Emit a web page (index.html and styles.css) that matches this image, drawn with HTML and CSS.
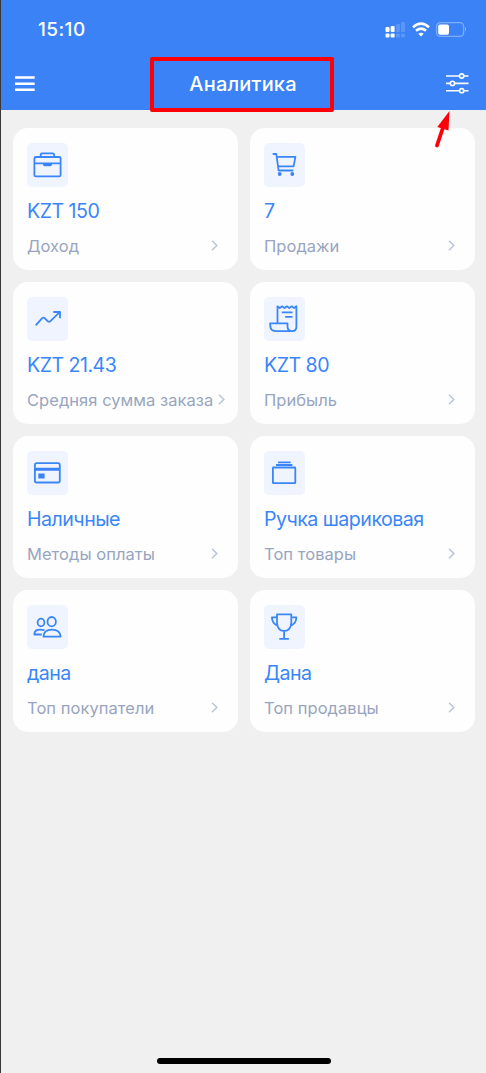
FILE: index.html
```html
<!DOCTYPE html>
<html lang="ru">
<head>
<meta charset="utf-8">
<meta name="viewport" content="width=device-width, initial-scale=1">
<title>Аналитика</title>
<link rel="stylesheet" href="styles.css">
</head>
<body>
<div class="screen">
  <header class="header">
    <div class="status">
      <span class="time">15:10</span>
      <svg class="status-icons" width="84" height="18" viewBox="0 0 84 18" fill="#fff">
        <g>
          <rect x="0.5" y="6" width="4" height="5" rx="1"/><rect x="5.6" y="5" width="4" height="6" rx="1"/>
          <rect x="0.5" y="12.5" width="4" height="4" rx="1"/><rect x="5.6" y="12.5" width="4" height="4" rx="1"/>
        </g>
        <g opacity=".16">
          <rect x="11" y="3" width="4" height="8" rx="1"/><rect x="16" y="1" width="4" height="10" rx="1"/>
          <rect x="11" y="12.5" width="4" height="4" rx="1"/><rect x="16" y="12.5" width="4" height="4" rx="1"/>
        </g>
        <g fill="none" stroke="#fff" stroke-width="2.6">
          <path d="M28 6.2Q36 -.8 44 6.2"/><path d="M31 9.7Q36 5.6 41 9.7"/>
        </g>
        <path d="M33.3 12.8Q36 10.8 38.7 12.8L36 15.6Z"/>
        <rect x="51.6" y="1.7" width="27" height="13.6" rx="3.6" fill="none" stroke="#fff" stroke-opacity=".34" stroke-width="1.3"/>
        <rect x="53.2" y="3.5" width="10.8" height="10.2" rx="1.8"/>
        <path d="M80 6Q82.4 8 80 10.6Z" opacity=".4"/>
      </svg>
    </div>
    <div class="navbar">
      <svg class="menu" width="20" height="17" viewBox="0 0 20 17" stroke="#fff" stroke-width="2.5"><path d="M0 2.5H19.7M0 8.7H19.7M0 14.8H19.7"/></svg>
      <h1 class="title">Аналитика</h1>
      <svg class="filters" width="23" height="21" viewBox="0 0 23 21" fill="#3a82f5" stroke="#fff" stroke-width="1.6">
        <path d="M0 3H22.5M0 10.4H22.5M0 17.7H22.5"/>
        <circle cx="15.7" cy="3" r="2.1"/><circle cx="6.5" cy="10.4" r="2.1"/><circle cx="15.7" cy="17.7" r="2.1"/>
      </svg>
    </div>
  </header>

  <main class="grid">
    <section class="card">
      <svg class="icon" viewBox="0 0 41 44"><rect x="7.4" y="14" width="26.2" height="19.4" rx="1.5"/><path d="M13.7 14V11.8Q13.7 10.4 15.1 10.4H25.7Q27.1 10.4 27.1 11.8V14M7.4 20.4H33.6"/><path class="solid" d="M16 20.4H25V21.5Q25 23.3 23.2 23.3H17.8Q16 23.3 16 21.5Z"/></svg>
      <strong class="value">KZT 150</strong>
      <div class="row"><span class="label">Доход</span><svg class="chevron" viewBox="0 0 7 11"><path d="M1 .8L5.8 5.5L1 10.2"/></svg></div>
    </section>
    <section class="card">
      <svg class="icon" viewBox="0 0 41 44"><path d="M8.7 11H12.3L14.6 27.5H29.3M12.8 13.9H31.4L29.6 23.4H14"/><circle class="solid" cx="15.7" cy="31" r="1.9"/><circle class="solid" cx="28.3" cy="31" r="1.9"/></svg>
      <strong class="value">7</strong>
      <div class="row"><span class="label">Продажи</span><svg class="chevron" viewBox="0 0 7 11"><path d="M1 .8L5.8 5.5L1 10.2"/></svg></div>
    </section>
    <section class="card">
      <svg class="icon" viewBox="0 0 41 44"><path d="M8.7 28.3L15.2 21.2Q16.4 20 17.7 21.2L20.6 24.1Q22 25.3 23.4 24.1L32.7 15.1M26.3 15H33V21.3"/></svg>
      <strong class="value">KZT 21.43</strong>
      <div class="row"><span class="label">Средняя сумма заказа</span><svg class="chevron" viewBox="0 0 7 11"><path d="M1 .8L5.8 5.5L1 10.2"/></svg></div>
    </section>
    <section class="card">
      <svg class="icon" viewBox="0 0 41 44"><path d="M13.5 26.3V9.3L15.8 11L18.1 9.3L20.5 11L22.9 9.3L25.3 11L27.7 9.3L30.1 11L32.4 9.3V29.8Q32.4 34.1 28.1 34.1Q23.5 34.1 23.5 29.5V26.3H6.2V28Q6.2 34.1 11.5 34.1H28.1M17.8 15.4H28.5M21.2 19.8H28.5"/></svg>
      <strong class="value">KZT 80</strong>
      <div class="row"><span class="label">Прибыль</span><svg class="chevron" viewBox="0 0 7 11"><path d="M1 .8L5.8 5.5L1 10.2"/></svg></div>
    </section>
    <section class="card">
      <svg class="icon" viewBox="0 0 41 44"><rect x="7.9" y="12.2" width="24.9" height="19.3" rx="1.8"/><path class="solid" d="M7.9 16.7H32.8V19.7H7.9ZM11.3 22.4H17.6V27.4H11.3Z"/></svg>
      <strong class="value">Наличные</strong>
      <div class="row"><span class="label">Методы оплаты</span><svg class="chevron" viewBox="0 0 7 11"><path d="M1 .8L5.8 5.5L1 10.2"/></svg></div>
    </section>
    <section class="card">
      <svg class="icon" viewBox="0 0 41 44"><rect x="8.9" y="16.5" width="22.4" height="15.7" rx=".5"/><path d="M12 14H28.4M14 11.3H26.7"/></svg>
      <strong class="value">Ручка шариковая</strong>
      <div class="row"><span class="label">Топ товары</span><svg class="chevron" viewBox="0 0 7 11"><path d="M1 .8L5.8 5.5L1 10.2"/></svg></div>
    </section>
    <section class="card">
      <svg class="icon" viewBox="0 0 41 44"><ellipse cx="24.7" cy="16.7" rx="4.2" ry="4.7"/><path d="M16.4 31.6Q16.7 24.6 24.9 24.6Q33.2 24.6 33.6 31.6Z"/><ellipse cx="14" cy="17.5" rx="3.4" ry="3.9"/><path d="M17.5 25.2Q7.3 22.8 7.4 29.5H14.8"/></svg>
      <strong class="value">дана</strong>
      <div class="row"><span class="label">Топ покупатели</span><svg class="chevron" viewBox="0 0 7 11"><path d="M1 .8L5.8 5.5L1 10.2"/></svg></div>
    </section>
    <section class="card">
      <svg class="icon" viewBox="0 0 41 44"><path d="M13 9.3H27.3V18Q26.6 26 20.1 26Q13.7 26 13 18ZM13 12.3H7.9Q8 18.5 13.8 20.8M27.3 12.3H32.4Q32.3 18.5 26.5 20.8M20.1 26V33.8M15.3 33.8H24.9"/></svg>
      <strong class="value">Дана</strong>
      <div class="row"><span class="label">Топ продавцы</span><svg class="chevron" viewBox="0 0 7 11"><path d="M1 .8L5.8 5.5L1 10.2"/></svg></div>
    </section>
  </main>

  <div class="home-indicator"></div>
  <div class="highlight"></div>
  <svg class="arrow" width="18" height="40" viewBox="0 0 18 40" fill="#fe0008"><path d="M15.5 1L3.3 17L14.5 20.5Z"/><path d="M9.5 16L3 35.5" stroke="#fe0008" stroke-width="3.8" stroke-linecap="round"/></svg>
</div>
</body>
</html>
```
FILE: styles.css
```css
* { box-sizing: border-box; }

body {
  margin: 0;
  font-family: Inter, "Liberation Sans", sans-serif;
}

.screen {
  position: relative;
  display: flex;
  flex-direction: column;
  height: 1073px;
  background: #f0f0f0;
  border-left: 1px solid #38383a;
  overflow: hidden;
}

.header {
  height: 110px;
  flex: none;
  background: #3a82f5;
  color: #fff;
}

.status {
  display: flex;
  justify-content: space-between;
  align-items: center;
  height: 60px;
  padding: 0 17px 0 37px;
}

.time {
  font-size: 19px;
  font-weight: 500;
  line-height: 24px;
  letter-spacing: 0.4px;
}

.navbar {
  display: grid;
  grid-template-columns: 60px 1fr 60px;
  align-items: center;
  height: 47px;
  padding: 0 17px 0 14px;
}

.title {
  margin: 0;
  padding-left: 2px;
  font-size: 20px;
  font-weight: 500;
  line-height: 26px;
  letter-spacing: 0.2px;
  text-align: center;
}

.filters { justify-self: end; }

.grid {
  display: grid;
  grid-template-columns: 225px 225px;
  grid-auto-rows: 142px;
  gap: 12px;
  padding: 18px 0 0 12px;
}

.card {
  display: flex;
  flex-direction: column;
  align-items: flex-start;
  padding: 14.5px 20px 0 14px;
  border-radius: 15px;
  background: #fefefe;
}

.icon {
  width: 41px;
  height: 44px;
  border-radius: 5px;
  background: #f0f4fe;
  fill: none;
  stroke: #3a86f8;
  stroke-width: 1.8;
  stroke-linejoin: round;
}

.icon .solid {
  fill: #3a82f5;
  stroke: none;
}

.value {
  margin-top: 11px;
  color: #3a86f8;
  font-size: 19.6px;
  font-weight: 400;
  line-height: 26px;
  letter-spacing: -0.52px;
  white-space: nowrap;
}

.row {
  display: flex;
  align-items: center;
  justify-content: space-between;
  gap: 5px;
  width: 100%;
  margin-top: 11px;
}

.label {
  color: #98a5bf;
  font-size: 16.5px;
  line-height: 22px;
  letter-spacing: 0.04px;
  white-space: nowrap;
}

.chevron {
  flex: none;
  width: 7px;
  height: 11px;
  fill: none;
  stroke: #bcc7dc;
  stroke-width: 1.6;
}

.home-indicator {
  width: 174px;
  height: 6px;
  margin: auto auto 9px 156px;
  border-radius: 3px;
  background: #000;
}

.highlight {
  position: absolute;
  left: 148.5px;
  top: 57px;
  width: 184px;
  height: 54.5px;
  border: 4px solid #fe0008;
  border-radius: 2px;
}

.arrow {
  position: absolute;
  left: 433px;
  top: 110px;
}
```
